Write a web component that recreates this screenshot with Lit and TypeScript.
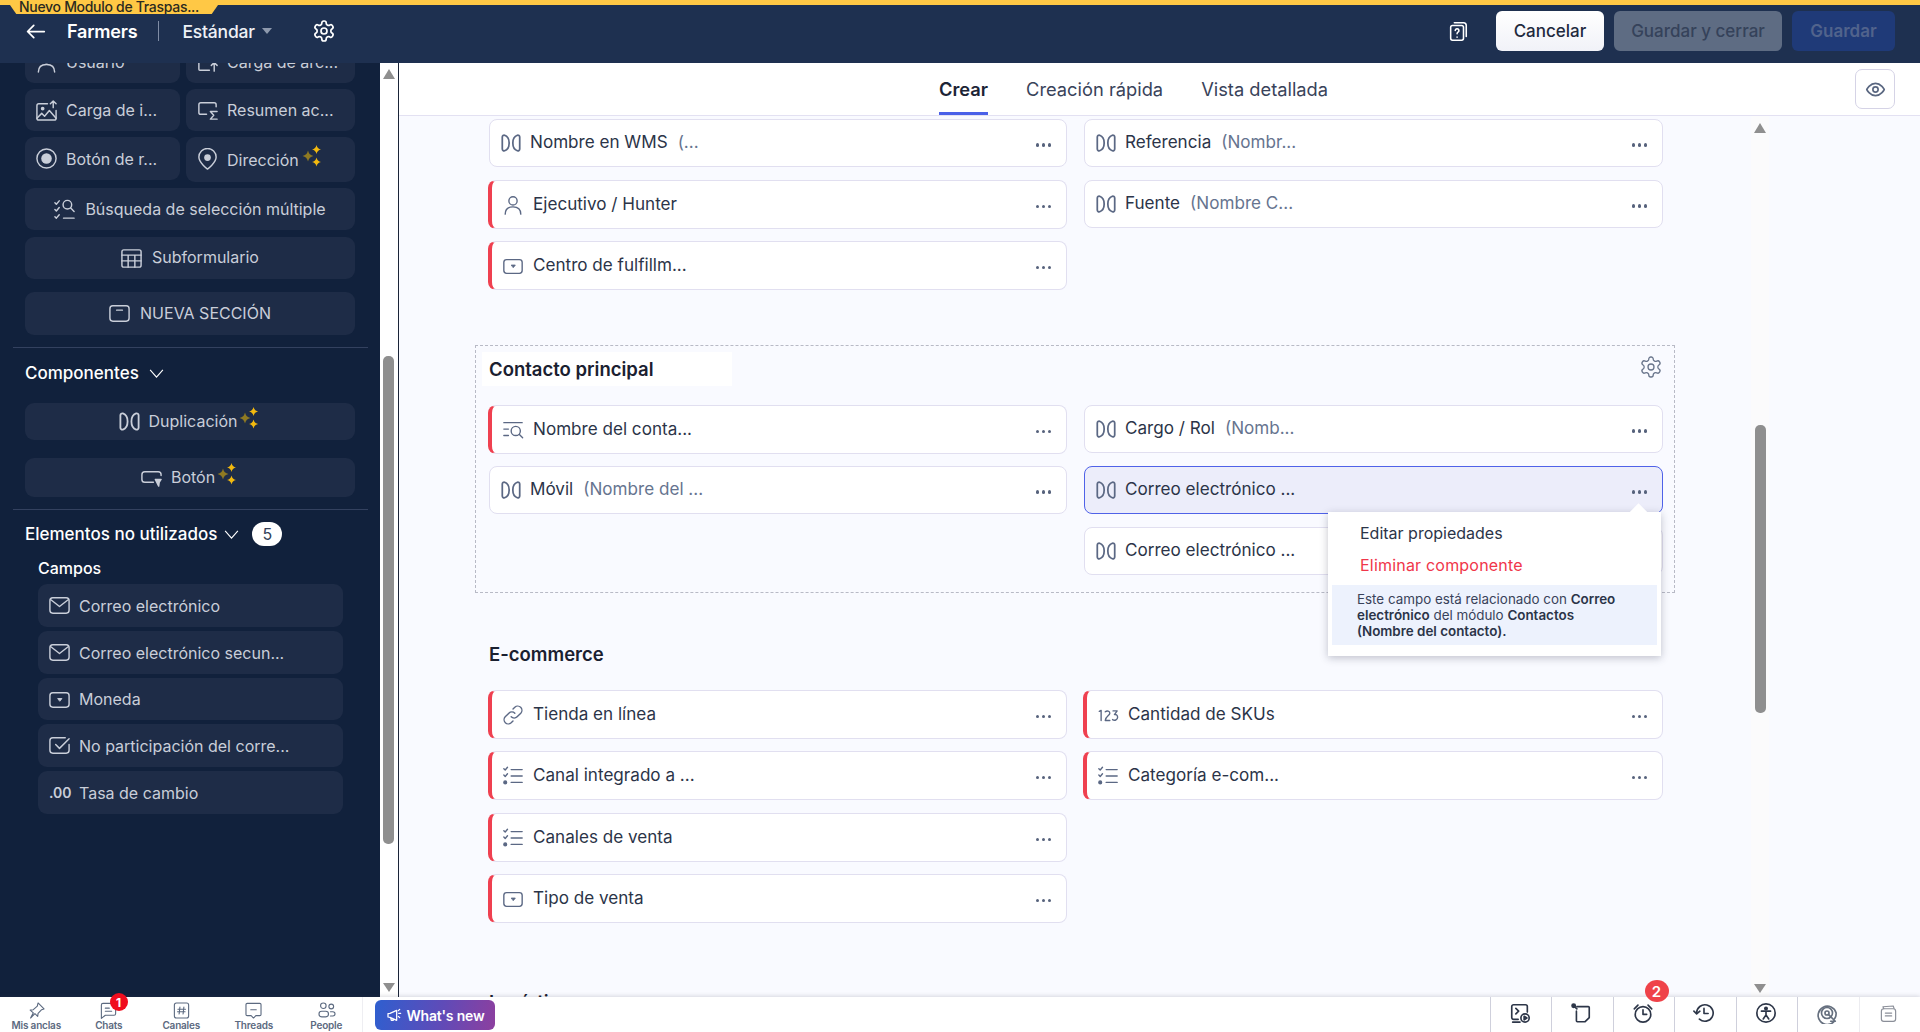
import {css, html, LitElement, svg, SVGTemplateResult} from 'lit';
import {customElement} from 'lit/decorators.js';

const ico = (body: SVGTemplateResult, size = 20, sw = 1.7) => html`<svg
  width=${size} height=${size} viewBox="0 0 24 24" fill="none" stroke="currentColor"
  stroke-width=${sw} stroke-linecap="round" stroke-linejoin="round">${body}</svg>`;

const GEAR = svg`<path d="M12.22 2h-.44a2 2 0 0 0-2 2v.18a2 2 0 0 1-1 1.73l-.43.25a2 2 0 0 1-2 0l-.15-.08a2 2 0 0 0-2.73.73l-.22.38a2 2 0 0 0 .73 2.73l.15.1a2 2 0 0 1 1 1.72v.51a2 2 0 0 1-1 1.74l-.15.09a2 2 0 0 0-.73 2.73l.22.38a2 2 0 0 0 2.73.73l.15-.08a2 2 0 0 1 2 0l.43.25a2 2 0 0 1 1 1.73V20a2 2 0 0 0 2 2h.44a2 2 0 0 0 2-2v-.18a2 2 0 0 1 1-1.73l.43-.25a2 2 0 0 1 2 0l.15.08a2 2 0 0 0 2.73-.73l.22-.39a2 2 0 0 0-.73-2.73l-.15-.08a2 2 0 0 1-1-1.74v-.5a2 2 0 0 1 1-1.74l.15-.09a2 2 0 0 0 .73-2.73l-.22-.38a2 2 0 0 0-2.73-.73l-.15.08a2 2 0 0 1-2 0l-.43-.25a2 2 0 0 1-1-1.73V4a2 2 0 0 0-2-2z"/><circle cx="12" cy="12" r="3"/>`;

const ICONS: Record<string, SVGTemplateResult> = {
  dup: svg`<path d="M2.5 5.5a2 2 0 0 1 2.6-1.9C8 4.6 10 7.8 10 12s-2 7.4-4.9 8.4A2 2 0 0 1 2.5 18.5Z"/><path d="M21.5 5.5a2 2 0 0 0-2.6-1.9C16 4.6 14 7.8 14 12s2 7.4 4.9 8.4a2 2 0 0 0 2.6-1.9Z"/>`,
  user: svg`<circle cx="12" cy="7.5" r="4.5"/><path d="M3.5 22c0-5.5 3.5-8 8.5-8s8.5 2.5 8.5 8"/>`,
  currency: svg`<rect x="2" y="5" width="20" height="15" rx="3"/><path d="M10.5 11h4l-2 2.500z" fill="currentColor" stroke-width="1"/>`,
  lookup: svg`<path d="M2 4h20M2 11h5M2 18h5"/><circle cx="15" cy="13" r="5"/><path d="m19 17 3.5 3.5"/>`,
  link: svg`<path d="M10 14a4.5 4.5 0 0 0 6.5 0l4-4a4.600 4.600 0 0 0-6.500-6.500l-2 2"/><path d="M14 10a4.5 4.5 0 0 0-6.500 0l-4 4a4.600 4.600 0 0 0 6.500 6.500l2-2"/>`,
  multi: svg`<path d="M10 5h12M10 12h12M10 19h12"/><path d="m2 4 1.5 1.5L6 2.500M2 11l1.500 1.500L6 9.500"/><circle cx="3.5" cy="19" r="1.5" fill="currentColor"/>`,
  nums: svg`<path d="M2.5 8 4.500 7v11M9 8.500c2-1.500 5-1 5 1.500 0 2.500-5 3.500-5 8h5M17.500 7.500h4.500l-3 4c2-.5 3.500.8 3.500 3 0 3-3.500 4-5.500 2.500"/>`,
  mail: svg`<rect x="2" y="4" width="20" height="16" rx="3"/><path d="m3 6 9 7 9-7"/>`,
  check: svg`<path d="M22 11v6a3 3 0 0 1-3 3H5a3 3 0 0 1-3-3V7a3 3 0 0 1 3-3h13"/><path d="m8 11 4 4 10-10"/>`,
  imgup: svg`<path d="M13 5H4a2 2 0 0 0-2 2v13a2 2 0 0 0 2 2h16a2 2 0 0 0 2-2v-8"/><path d="m2 20 5-5 3 3 5-6 7 8"/><circle cx="8" cy="10" r="1.2" fill="currentColor"/><path d="M19 9V2m-3 3 3-3 3 3"/>`,
  fileup: svg`<path d="M14 20H4a1 1 0 0 1-1-1V6a1 1 0 0 1 1-1h6"/><path d="M19 21v-9m-3 3 3-3 3 3"/>`,
  summary: svg`<path d="M21 8V6a2 2 0 0 0-2-2H5a2 2 0 0 0-2 2v8a2 2 0 0 0 2 2h6"/><path d="M22 13h-7l3.5 4-3.5 4h7"/>`,
  radio: svg`<circle cx="12" cy="12" r="10"/><circle cx="12" cy="12" r="5.5" fill="currentColor" stroke="none"/>`,
  pin: svg`<path d="M12 22s-9-6.500-9-12.500a9 9 0 0 1 18 0C21 15.500 12 22 12 22z"/><circle cx="12" cy="10" r="3.5" fill="currentColor" stroke="none"/>`,
  msearch: svg`<path d="m2 5 1.5 1.5L6.500 3M2 12l1.500 1.500 3-3.500M2 19.500 3.500 21 6.500 17.500M11 21h11"/><circle cx="15" cy="7" r="4.5"/><path d="m18.500 10.500 3.500 3.500"/>`,
  table: svg`<rect x="2" y="3" width="20" height="18" rx="2"/><path d="M2 8.500h20M2 14.500h20M8.500 8.500V21M15.500 8.500V21"/>`,
  section: svg`<rect x="2" y="4" width="20" height="16" rx="3"/><path d="M9 8.500h6"/>`,
  button: svg`<path d="M22 10V9a3 3 0 0 0-3-3H5a3 3 0 0 0-3 3v5a3 3 0 0 0 3 3h9"/><path d="m16 14 6 0-2 3-.5 4z" fill="currentColor"/>`,
};

const icon = (name: string, size = 23, sw = 1.5) => ico(ICONS[name], size, name === 'dup' ? 1.9 : sw);

const star = (x: number, y: number, r: number, fill: string) =>
  svg`<path d="M${x} ${y - r}Q${x + r * 0.18} ${y - r * 0.18} ${x + r} ${y}Q${x + r * 0.18} ${y + r * 0.18} ${x} ${y + r}Q${x - r * 0.18} ${y + r * 0.18} ${x - r} ${y}Q${x - r * 0.18} ${y - r * 0.18} ${x} ${y - r}Z" fill=${fill}/>`;

const sparkle = html`<svg class="spark" width="22" height="22" viewBox="0 0 22 22">
  ${star(7, 11, 5.5, '#8f7a22')}${star(15.5, 4.5, 4.5, '#f2b90f')}${star(15.5, 17, 4.5, '#f2b90f')}
</svg>`;

interface Field { icon: string; label: string; sub?: string; req?: boolean; active?: boolean; }
const T1: (Field | null)[] = [
  {icon: 'dup', label: 'Nombre en WMS', sub: '(...'},
  {icon: 'dup', label: 'Referencia', sub: '(Nombr...'},
  {icon: 'user', label: 'Ejecutivo / Hunter', req: true},
  {icon: 'dup', label: 'Fuente', sub: '(Nombre C...'},
  {icon: 'currency', label: 'Centro de fulfillm...', req: true},
];
const CONTACT: (Field | null)[] = [
  {icon: 'lookup', label: 'Nombre del conta...', req: true},
  {icon: 'dup', label: 'Cargo / Rol', sub: '(Nomb...'},
  {icon: 'dup', label: 'Móvil', sub: '(Nombre del ...'},
  {icon: 'dup', label: 'Correo electrónico ...', active: true},
  null,
  {icon: 'dup', label: 'Correo electrónico ...'},
];
const ECOM: (Field | null)[] = [
  {icon: 'link', label: 'Tienda en línea', req: true},
  {icon: 'nums', label: 'Cantidad de SKUs', req: true},
  {icon: 'multi', label: 'Canal integrado a ...', req: true},
  {icon: 'multi', label: 'Categoría e-com...', req: true},
  {icon: 'multi', label: 'Canales de venta', req: true},
  null,
  {icon: 'currency', label: 'Tipo de venta', req: true},
];
const UNUSED = [
  {icon: 'mail', label: 'Correo electrónico'},
  {icon: 'mail', label: 'Correo electrónico secun...'},
  {icon: 'currency', label: 'Moneda', short: true},
  {icon: 'check', label: 'No participación del corre...'},
  {icon: '', label: 'Tasa de cambio'},
];
const DOCK = [
  {label: 'Mis anclas', badge: false, icon: svg`<path d="M14 2.500 21.500 10l-3 1-4.500 4.500-.5 4L10 16l-5.500 5.500L8 15l-4-3.500 4-.5L13 6.500z"/>`},
  {label: 'Chats', badge: true, icon: svg`<path d="M5 3h14a2 2 0 0 1 2 2v11a2 2 0 0 1-2 2H8l-5 4V5a2 2 0 0 1 2-2z"/><path d="M8 9h5M8 13h8"/>`},
  {label: 'Canales', badge: false, icon: svg`<rect x="3" y="2.500" width="18" height="19" rx="2.500"/><path d="M10 7.500 9 16.500M15 7.500 14 16.500M7.500 10.500h9.500M7 13.500h9.500"/>`},
  {label: 'Threads', badge: false, icon: svg`<path d="M4 3h16a1.500 1.500 0 0 1 1.500 1.500V17a1.500 1.500 0 0 1-1.500 1.500h-5l-3 3-3-3H4A1.500 1.500 0 0 1 2.500 17V4.500A1.500 1.500 0 0 1 4 3z"/><path d="M8.500 11h7"/>`},
  {label: 'People', badge: false, icon: svg`<circle cx="8" cy="6" r="3.500"/><circle cx="18" cy="7" r="3"/><rect x="2.500" y="13" width="12" height="7" rx="3.500"/><path d="M17 13.500h3a2.500 2.500 0 0 1 0 5.500h-3"/>`},
];
const TRAY = [
  svg`<path d="M10 19H5a2 2 0 0 1-2-2V5a2 2 0 0 1 2-2h13a2 2 0 0 1 2 2v6"/><path d="m7.500 7 3 3-3 3M4 22h8"/><circle cx="17.500" cy="17.500" r="4.500"/><path d="m16.500 15.500 3 2-3 2z" fill="currentColor"/>`,
  svg`<path d="M7.500 5H20a1 1 0 0 1 1 1v11l-4.500 4.500H8a1 1 0 0 1-1-1V10"/><circle cx="4" cy="4" r="1.800" fill="currentColor"/><path d="m5 5 2.500 2.500"/>`,
  svg`<circle cx="12" cy="13.500" r="8.500"/><path d="M12 8.500v5h4M2.500 7.500 6.500 3.500M21.500 7.500l-4-4"/>`,
  svg`<path d="M4 12a9 9 0 1 1 3 6.700"/><path d="M1 10l3 3 3.500-3M12 7v5.500h4.500"/>`,
  svg`<circle cx="12" cy="12" r="10"/><circle cx="12" cy="7" r="1.300" fill="currentColor"/><path d="M7 10h10M12 10v4l-3 4.500M12 14l3 4.500"/>`,
  svg`<path d="M20 21a10 10 0 1 1 2-9c0 3-.5 5-2 6.500"/><circle cx="12" cy="12" r="6"/><circle cx="12" cy="12" r="2.200"/><path d="m13.500 13.500 7.500 7.500h-5"/>`,
  svg`<path d="M6 6 5 3.500 18 2.500l1 3"/><rect x="3" y="6" width="18" height="16" rx="3"/><path d="M8 11.500h8M8 15h8"/>`,
];

@customElement('app-root')
export class AppRoot extends LitElement {
  static override styles = css`
    :host {
      display: flex;
      flex-direction: column;
      width: 1920px;
      height: 1032px;
      overflow: hidden;
      font-family: Inter, "Noto Sans", sans-serif;
      color: #2a3347;
      background: #f9faff;
    }
    svg { display: block; flex: none; }

    /* top bar */
    .top {
      position: relative;
      z-index: 5;
      flex: none;
      height: 63px;
      box-sizing: border-box;
      border-top: 5px solid #ffc845;
      background: #1e3050;
      color: #fff;
      display: flex;
      align-items: center;
      padding: 0 25px 6px 25px;
      letter-spacing: -0.2px;
    }
    .module-tab {
      position: absolute;
      left: 10px;
      top: -5px;
      height: 14px;
      width: 208px;
      background: #ffc845;
      color: #2b2a20;
      font-size: 14px;
      font-weight: 500;
      line-height: 14px;
      padding-left: 9px;
      box-sizing: border-box;
      overflow: hidden;
      white-space: nowrap;
      clip-path: polygon(0 0, 100% 0, 100% 35%, 97% 100%, 3% 100%, 0 35%);
      letter-spacing: -0.3px;
    }
    .farmers { font-size: 18px; font-weight: 600; margin-left: 21px; }
    .sep { width: 1px; height: 20px; background: #7f8ca5; margin: 0 23px 0 21px; }
    .layout { font-size: 17.5px; font-weight: 500; color: #eef1f6; }
    .caret { width: 0; height: 0; border: 5.5px solid transparent; border-top: 6px solid #8e99ad; border-bottom: 0; margin-left: 7px; margin-right: 40px; }
    .spacer { flex: 1; }
    .help { margin-right: 27px; }
    .btn {
      height: 40px;
      box-sizing: border-box;
      border-radius: 6px;
      display: flex;
      align-items: center;
      justify-content: center;
      font-size: 17px;
      font-weight: 500;
      letter-spacing: 0;
    }
    .cancel { width: 108px; background: linear-gradient(#fff, #f1f2f8); color: #1f2a3e; margin-right: 10px; }
    .save-close { width: 168px; background: #5e6c83; color: #35425a; margin-right: 10px; }
    .save { width: 103px; background: #1f3a78; color: #51638c; font-weight: 600; }

    /* body */
    .body { flex: 1; min-height: 0; display: flex; }
    .side {
      width: 380px;
      flex: none;
      background: #11213c;
      overflow: hidden;
      color: #c9ced9;
    }
    .side-inner { margin-top: -22px; padding-left: 25px; width: 330px; }
    .tiles { display: grid; grid-template-columns: 155px 169px; column-gap: 6px; row-gap: 6px; width: 330px; }
    .tile {
      background: #1e2c47;
      border-radius: 9px;
      height: 42px;
      display: flex;
      align-items: center;
      box-sizing: border-box;
      padding-left: 11px;
      gap: 10px;
      font-size: 16px;
      white-space: nowrap;
    }
    .tile > svg:first-child { margin: 0 -1.5px; }
    .tile.full { width: 330px; justify-content: center; padding-left: 0; gap: 11px; }
    .tile.tall { height: 43px; }
    .tile.addr { height: 45px; }
    .tile.comp { gap: 9px; }
    .tile.nudge span { position: relative; top: -1px; }
    .spark { margin-left: -8px; margin-top: -8px; }
    .mt6 { margin-top: 6px; }
    .mt7 { margin-top: 7px; }
    .mt13 { margin-top: 13px; }
    .dup-tile { height: 37px; margin-top: 19px; }
    .btn-tile { height: 39px; margin-top: 18px; }
    .rule { height: 1px; background: #33415f; margin: 12px 0 0 -12px; width: 355px; }
    .group { display: flex; align-items: center; color: #fff; font-size: 17px; font-weight: 500; }
    .group svg { margin-left: 9px; }
    .group .tight { margin-left: 6px; }
    .g-comp { margin-top: 14px; height: 22px; }
    .g-unused { margin-top: 12px; height: 24px; }
    .count {
      margin-left: 12px;
      width: 30px;
      height: 24px;
      border-radius: 12px;
      background: #fff;
      color: #33405a;
      font-size: 16px;
      font-weight: 400;
      display: flex;
      align-items: center;
      justify-content: center;
    }
    .campos { margin: 11px 0 0 13px; height: 22px; line-height: 22px; color: #fff; font-size: 16px; font-weight: 500; }
    .unused { margin: 5px 0 0 13px; display: flex; flex-direction: column; gap: 4px; width: 305px; }
    .unused .tile { height: 43px; gap: 10px; }
    .unused .tile.short { height: 42px; }
    .decimals { width: 20px; text-align: center; font-size: 14px; font-weight: 600; flex: none; }

    .bar {
      width: 19px;
      flex: none;
      box-sizing: border-box;
      background: #fff;
      border-right: 1px solid #1a2438;
      display: flex;
      flex-direction: column;
      align-items: center;
      padding: 6px 0 5px;
    }
    .up, .down { width: 0; height: 0; border: 6.5px solid transparent; flex: none; }
    .up { border-bottom: 10px solid #8f8f8f; border-top: 0; }
    .down { border-top: 9px solid #8f8f8f; border-bottom: 0; }
    .bar .thumb { width: 11px; height: 488px; background: #8f8f8f; border-radius: 5px; margin-top: 277px; margin-right: 1px; }
    .bar .gap { flex: 1; }

    .main { flex: 1; min-width: 0; display: flex; flex-direction: column; }
    .tabs {
      position: relative;
      flex: none;
      height: 53px;
      box-sizing: border-box;
      background: #fff;
      border-bottom: 1px solid #e3e1f2;
      display: flex;
      padding-left: 540px;
      gap: 38px;
      font-size: 18.3px;
      color: #39435a;
      z-index: 2;
    }
    .tab { height: 52px; line-height: 52px; box-sizing: border-box; }
    .tab.on { font-weight: 600; color: #1c2436; border-bottom: 3px solid #4a60e8; }
    .eye {
      position: absolute;
      right: 25px;
      top: 6px;
      width: 40px;
      height: 40px;
      box-sizing: border-box;
      border: 1px solid #d5d3e6;
      border-radius: 7px;
      display: flex;
      align-items: center;
      justify-content: center;
      color: #5a6781;
    }
    .canvas { flex: 1; min-height: 0; display: flex; overflow: hidden; }
    .form { width: 1352px; flex: none; padding: 3px 0 0 76px; box-sizing: border-box; }
    .grid { display: grid; grid-template-columns: 578px 579px; gap: 12px 17px; grid-auto-rows: 49px; }
    .grid.ecom { grid-template-rows: 49px 50px 49px 49px; }
    .plain { margin-left: 14px; }
    .box {
      position: relative;
      width: 1200px;
      box-sizing: border-box;
      margin-top: 55px;
      border: 1px dashed #b8bac6;
      padding: 6px 0 16px 13px;
    }
    .box-title {
      width: 250px;
      height: 34px;
      margin-left: -7px;
      padding-left: 7px;
      box-sizing: border-box;
      background: #fff;
      font-size: 18.5px;
      font-weight: 600;
      line-height: 34px;
      color: #1a2030;
      margin-bottom: 19px;
    }
    .box-gear { position: absolute; right: 11px; top: 9px; color: #68748b; }
    .sec-title { margin: 44px 0 19px 14px; height: 34px; line-height: 34px; font-size: 18.5px; font-weight: 600; color: #1a2030; }
    .last { margin-top: 62px; }
    .field {
      display: flex;
      align-items: center;
      box-sizing: border-box;
      height: 48px;
      background: #fff;
      border: 1px solid #e1dff0;
      border-radius: 8px;
      padding: 0 15px 0 12px;
      font-size: 17.1px;
      color: #2b3448;
      white-space: nowrap;
    }
    .field.req {
      height: 49px;
      margin-left: -1px;
      border-left: 4px solid #ef4050;
      padding-left: 11px;
    }
    .field.active { background: #ecedfa; border-color: #4f62e8; }
    .field-icon { color: #5b6884; width: 18px; display: flex; margin-right: 10px; flex: none; }
    .field-icon svg { margin: 0 -2px; }
    .field.req .field-icon { width: 20px; margin-right: 10px; }
    .field.req .field-icon svg { margin: 0 -1px; }
    .field-text { flex: 1; padding-bottom: 4px; }
    .field.req .field-text { padding-bottom: 2px; }
    .sub { color: #66748f; margin-left: 10px; }
    .dots { display: flex; gap: 2.5px; margin-top: 4px; }
    .dots i { width: 3.5px; height: 3.5px; border-radius: 50%; background: #56627c; }

    .menu {
      position: absolute;
      left: 852px;
      top: 166px;
      width: 333px;
      height: 144px;
      box-sizing: border-box;
      background: #fff;
      box-shadow: 0 2px 8px rgba(40, 44, 70, .28);
      padding: 0 4px;
      z-index: 3;
    }
    .menu::before {
      content: '';
      position: absolute;
      right: 16px;
      top: -6px;
      width: 13px;
      height: 13px;
      background: #fff;
      transform: rotate(45deg);
    }
    .menu-item { position: relative; padding-left: 28px; font-size: 16px; height: 32px; line-height: 32px; color: #2b3448; }
    .menu-item:first-child { margin-top: 5px; }
    .menu-item.danger { color: #f0364a; letter-spacing: 0.2px; }
    .note {
      margin-top: 4px;
      height: 60px;
      box-sizing: border-box;
      background: #edf2fd;
      padding: 6px 10px 0 25px;
      font-size: 13.4px;
      line-height: 16px;
      color: #39425a;
    }
    .note b { font-weight: 600; color: #2b3448; }

    .scroll2 {
      width: 18px;
      flex: none;
      background: #fbfbfc;
      display: flex;
      flex-direction: column;
      align-items: center;
      padding: 7px 0 4px;
      box-sizing: border-box;
    }
    .scroll2 .thumb { width: 11px; height: 288px; border-radius: 5px; background: #8f8f8f; margin-top: 292px; }
    .scroll2 .gap { flex: 1; }

    /* dock */
    .dock {
      position: relative;
      z-index: 4;
      flex: none;
      height: 35px;
      background: #fff;
      box-shadow: 0 -1px 4px rgba(60, 60, 80, .18);
      display: flex;
      align-items: stretch;
    }
    .dock-left { width: 363px; flex: none; display: flex; border-right: 1px solid #eeeef2; box-sizing: border-box; }
    .dock-item {
      position: relative;
      width: 72.5px;
      flex: none;
      display: flex;
      flex-direction: column;
      align-items: center;
      color: #5c6a80;
      padding-top: 4px;
      box-sizing: border-box;
    }
    .dock-item span { font-size: 10px; font-weight: 600; line-height: 11px; letter-spacing: -0.2px; white-space: nowrap; }
    .pill1 {
      position: absolute;
      left: 37px;
      top: -4px;
      width: 18px;
      height: 18px;
      border-radius: 50%;
      background: #f00d1e;
      color: #fff;
      font-size: 12px;
      font-weight: 700;
      font-style: normal;
      display: flex;
      align-items: center;
      justify-content: center;
    }
    .whats {
      margin: 3px 0 2px 12px;
      width: 120px;
      border-radius: 6px;
      background: linear-gradient(100deg, #2f5fcf, #5f4bb8 55%, #8d3f9f);
      color: #fff;
      font-size: 14px;
      font-weight: 600;
      letter-spacing: -0.2px;
      display: flex;
      align-items: center;
      justify-content: center;
      gap: 5px;
    }
    .tray { margin-left: auto; display: flex; }
    .tray-cell {
      position: relative;
      width: 61.5px;
      display: flex;
      align-items: center;
      justify-content: center;
      border-left: 1px solid #cfd0dc;
      box-sizing: border-box;
      color: #2d3648;
      padding: 0 2px 3px 0;
    }
    .tray-cell.soft { color: #66707f; }
    .tray-cell.softer { color: #8b8f99; border-left-color: #ececf0; }
    .pill2 {
      position: absolute;
      left: 31px;
      top: -17px;
      width: 24px;
      height: 22px;
      border-radius: 50%;
      background: #ef4249;
      color: #fff;
      font-size: 15px;
      font-weight: 600;
      font-style: normal;
      display: flex;
      align-items: center;
      justify-content: center;
    }
  `;

  private renderField(f: Field | null) {
    if (!f) return html`<div></div>`;
    const cls = `field ${f.req ? 'req' : ''} ${f.active ? 'active' : ''}`;
    return html`<div class=${cls}>
      <span class="field-icon">${icon(f.icon, 22, 1.5)}</span>
      <span class="field-text">${f.label}${f.sub ? html`<span class="sub">${f.sub}</span>` : ''}</span>
      <span class="dots"><i></i><i></i><i></i></span>
    </div>`;
  }

  private renderSide() {
    const chevron = (cls = '') => html`<svg class=${cls} width="17" height="17" viewBox="0 0 24 24" fill="none" stroke="currentColor" stroke-width="1.6"><path d="m3 7 9 10 9-10"/></svg>`;
    return html`<aside class="side"><div class="side-inner">
      <div class="tiles">
        <div class="tile">${icon('user')}<span>Usuario</span></div>
        <div class="tile">${icon('fileup')}<span>Carga de arc...</span></div>
        <div class="tile">${icon('imgup')}<span>Carga de i...</span></div>
        <div class="tile">${icon('summary')}<span>Resumen ac...</span></div>
        <div class="tile tall">${icon('radio')}<span>Botón de r...</span></div>
        <div class="tile addr">${icon('pin')}<span>Dirección</span>${sparkle}</div>
      </div>
      <div class="tile full mt6">${icon('msearch')}<span>Búsqueda de selección múltiple</span></div>
      <div class="tile full nudge mt7">${icon('table')}<span>Subformulario</span></div>
      <div class="tile full nudge tall mt13">${icon('section')}<span>NUEVA SECCIÓN</span></div>
      <div class="rule"></div>
      <div class="group g-comp">Componentes ${chevron()}</div>
      <div class="tile full nudge comp dup-tile">${icon('dup')}<span>Duplicación</span>${sparkle}</div>
      <div class="tile full nudge comp btn-tile">${icon('button')}<span>Botón</span>${sparkle}</div>
      <div class="rule"></div>
      <div class="group g-unused">Elementos no utilizados ${chevron('tight')}
        <span class="count">5</span>
      </div>
      <div class="campos">Campos</div>
      <div class="unused">
        ${UNUSED.map(u => html`<div class="tile ${u.short ? 'short' : ''}">
          ${u.icon ? icon(u.icon) : html`<span class="decimals">.00</span>`}<span>${u.label}</span>
        </div>`)}
      </div>
    </div></aside>`;
  }

  override render() {
    return html`
      <header class="top">
        <div class="module-tab">Nuevo Modulo de Traspas...</div>
        ${ico(svg`<path d="M22 12H3M10 5l-7 7 7 7"/>`, 21, 2)}
        <span class="farmers">Farmers</span>
        <span class="sep"></span>
        <span class="layout">Estándar</span>
        <span class="caret"></span>
        ${ico(GEAR, 24, 1.7)}
        <span class="spacer"></span>
        <span class="help">${ico(svg`<rect x="4" y="6" width="14" height="16" rx="2"/><path d="M8 3h10a3 3 0 0 1 3 3v12"/><path d="M9 11.500a2 2 0 1 1 3 1.800c-.7.400-1 .8-1 1.700M11 18.500v.2"/>`, 22, 1.7)}</span>
        <div class="btn cancel">Cancelar</div>
        <div class="btn save-close">Guardar y cerrar</div>
        <div class="btn save">Guardar</div>
      </header>
      <div class="body">
        ${this.renderSide()}
        <div class="bar">
          <div class="up"></div><div class="thumb"></div><div class="gap"></div><div class="down"></div>
        </div>
        <main class="main">
          <nav class="tabs">
            <div class="tab on">Crear</div>
            <div class="tab">Creación rápida</div>
            <div class="tab">Vista detallada</div>
            <div class="eye">${ico(svg`<path d="M2 12s3.600-7 10-7 10 7 10 7-3.600 7-10 7-10-7-10-7z"/><circle cx="12" cy="12" r="3"/>`, 21, 1.9)}</div>
          </nav>
          <div class="canvas">
            <div class="form">
              <div class="grid plain">${T1.map(f => this.renderField(f))}</div>
              <section class="box">
                <div class="box-title">Contacto principal</div>
                <span class="box-gear">${ico(GEAR, 24, 1.3)}</span>
                <div class="grid">${CONTACT.map(f => this.renderField(f))}</div>
                <div class="menu">
                  <div class="menu-item">Editar propiedades</div>
                  <div class="menu-item danger">Eliminar componente</div>
                  <div class="note">Este campo está relacionado con <b>Correo electrónico</b> del módulo <b>Contactos<br>(Nombre del contacto).</b></div>
                </div>
              </section>
              <div class="sec-title">E-commerce</div>
              <div class="grid plain ecom">${ECOM.map(f => this.renderField(f))}</div>
              <div class="sec-title last">Logística</div>
            </div>
            <div class="scroll2">
              <div class="up"></div><div class="thumb"></div><div class="gap"></div><div class="down"></div>
            </div>
          </div>
        </main>
      </div>
      <footer class="dock">
        <div class="dock-left">
          ${DOCK.map(d => html`<div class="dock-item">
            ${ico(d.icon, 19, 1.4)}
            ${d.badge ? html`<i class="pill1">1</i>` : ''}
            <span>${d.label}</span>
          </div>`)}
        </div>
        <div class="whats">
          ${ico(svg`<path d="M3 10v5l3 .500L16 20V5L6 9.500zM7 16l1 4h3l-1-3"/><path d="M19 9.500h3M18.500 5.500l2-2M18.500 14l2 2"/>`, 16, 1.9)}
          What's new
        </div>
        <div class="tray">
          ${TRAY.map((t, i) => html`<div class="tray-cell ${i === 5 ? 'soft' : ''} ${i === 6 ? 'softer' : ''}">
            ${ico(t, i === 6 ? 19 : 22, i === 6 ? 1.5 : 1.8)}
            ${i === 2 ? html`<i class="pill2">2</i>` : ''}
          </div>`)}
        </div>
      </footer>
    `;
  }
}
